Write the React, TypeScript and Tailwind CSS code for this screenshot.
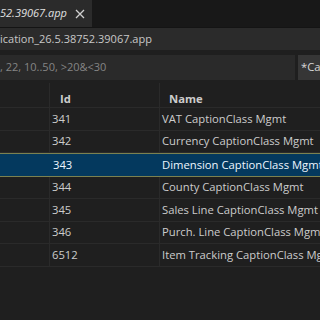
import React from 'react';

const rows = [
  { id: '341', name: 'VAT CaptionClass Mgmt', h: 'h-[23px]' },
  { id: '342', name: 'Currency CaptionClass Mgmt', h: 'h-[22px]' },
  { id: '343', name: 'Dimension CaptionClass Mgmt', h: 'h-[24px]', selected: true },
  { id: '344', name: 'County CaptionClass Mgmt', h: 'h-[22px]' },
  { id: '345', name: 'Sales Line CaptionClass Mgmt', h: 'h-[23px]' },
  { id: '346', name: 'Purch. Line CaptionClass Mgmt', h: 'h-[22px]' },
  { id: '6512', name: 'Item Tracking CaptionClass Mgmt', h: 'h-[23px]' },
];

const App: React.FC = () => {
  return (
    <div className="w-[320px] h-[320px] overflow-hidden bg-[#1f1f1f] font-['Open_Sans',sans-serif] text-[11.25px] text-[#cccccc]">
      {/* tabs */}
      <div className="flex h-[28px] bg-[#181818] border-b border-[#141414]">
        <div className="flex w-[92px] shrink-0 items-center bg-[#2b2b2b] pr-[7px]">
          <span className="italic text-[11px] text-[#e0e0e0] whitespace-nowrap">52.39067.app</span>
          <svg className="ml-auto" width="10" height="10" viewBox="0 0 10 10">
            <path d="M1 1L9 9M9 1L1 9" stroke="#d0d0d0" strokeWidth="1.3" />
          </svg>
        </div>
      </div>

      {/* breadcrumb */}
      <div className="flex h-[22px] items-center bg-[#2b2b2b] text-[11px] text-[#c8c8c8] whitespace-nowrap">
        ication_26.5.38752.39067.app
      </div>

      {/* filter */}
      <div className="flex h-[33px] items-center gap-[3px] pt-[1px]">
        <div className="flex h-[25px] w-[295px] shrink-0 items-center bg-[#2a2a2a] text-[11px] text-[#858585] whitespace-nowrap">
          , 22, 10..50, &gt;20&amp;&lt;30
        </div>
        <div className="flex h-[25px] flex-1 items-center bg-[#363636] pl-[3px] text-[#d8d8d8] whitespace-nowrap">
          *Caption
        </div>
      </div>

      {/* table */}
      <div className="flex flex-col">
        <div className="flex h-[25px] items-stretch border-b border-[#2a2a2a] font-bold">
          <div className="w-[50px] shrink-0 border-r border-[#2a2a2a]" />
          <div className="flex w-[110px] shrink-0 items-center border-r border-[#2a2a2a] pl-[10px] pt-[8px]">Id</div>
          <div className="flex items-center pl-[9px] pt-[8px] whitespace-nowrap">Name</div>
        </div>
        {rows.map((r) => (
          <div
            key={r.id}
            className={
              r.selected
                ? `flex ${r.h} items-center border-y border-[#7b8150] bg-[#04395e] text-[#eef6ff]`
                : `flex ${r.h} items-center border-b border-[#2a2a2a]`
            }
          >
            <div className={r.selected ? 'h-full w-[50px] shrink-0' : 'h-full w-[50px] shrink-0 border-r border-[#2a2a2a]'} />
            <div
              className={
                r.selected
                  ? 'flex h-full w-[110px] shrink-0 items-center pl-[3px]'
                  : 'flex h-full w-[110px] shrink-0 items-center border-r border-[#2a2a2a] pl-[2px]'
              }
            >
              {r.id}
            </div>
            <div className="pl-[2px] whitespace-nowrap">{r.name}</div>
          </div>
        ))}
      </div>
    </div>
  );
};

export default App;
